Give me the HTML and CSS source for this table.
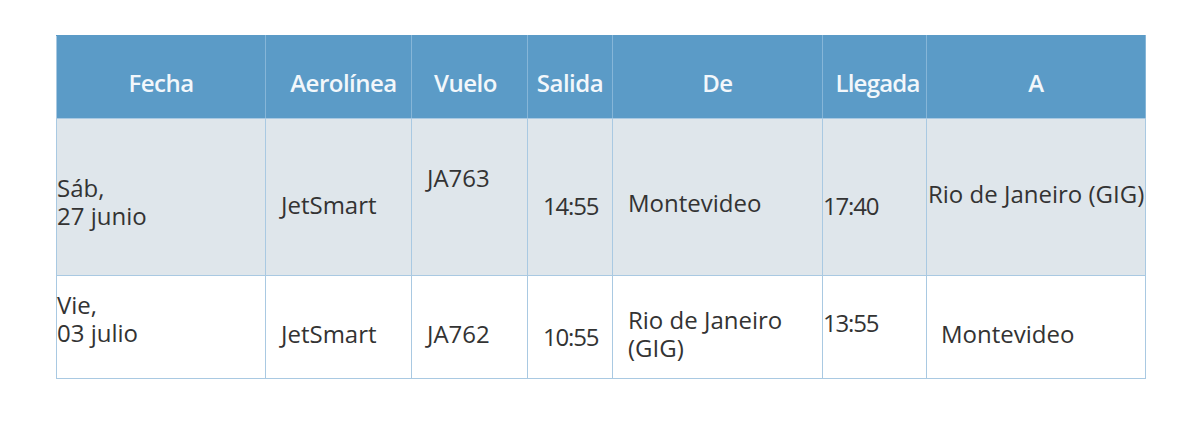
FILE: index.html
```html
<!DOCTYPE html>
<html lang="es">
<head>
<meta charset="utf-8">
<title>Vuelos</title>
<link rel="stylesheet" href="styles.css">
</head>
<body>
<div class="page">
  <table class="flights">
    <colgroup>
      <col class="c-fecha"><col class="c-aero"><col class="c-vuelo"><col class="c-salida"><col class="c-de"><col class="c-llegada"><col class="c-a">
    </colgroup>
    <thead>
      <tr class="head">
        <th>Fecha</th><th class="shift-r">Aerolínea</th><th class="shift-l">Vuelo</th><th>Salida</th><th>De</th><th class="tight">Llegada</th><th>A</th>
      </tr>
    </thead>
    <tbody>
      <tr class="row row-1">
        <td class="flush t55">Sáb,<br>27 junio</td>
        <td class="t72">JetSmart</td>
        <td class="t45">JA763</td>
        <td class="t73 time">14:55</td>
        <td class="t70">Montevideo</td>
        <td class="flush t73 time">17:40</td>
        <td class="near t61">Rio de Janeiro (GIG)</td>
      </tr>
      <tr class="row row-2">
        <td class="flush t15">Vie,<br>03 julio</td>
        <td class="t44">JetSmart</td>
        <td class="t44">JA762</td>
        <td class="t47 time">10:55</td>
        <td class="t30">Rio de Janeiro<br>(GIG)</td>
        <td class="flush t33 time">13:55</td>
        <td class="t44 wide">Montevideo</td>
      </tr>
    </tbody>
  </table>
</div>
</body>
</html>
```

FILE: styles.css
```css
html, body {
  margin: 0;
  padding: 0;
  background: #ffffff;
}

.page {
  padding: 35px 0 0 56px;
}

.flights {
  border-collapse: collapse;
  table-layout: fixed;
  width: 1089px;
  font-family: "Open Sans", "Noto Sans", sans-serif;
  font-size: 24px;
  color: #333333;
}

.c-fecha { width: 209px; }
.c-aero { width: 146px; }
.c-vuelo { width: 116px; }
.c-salida { width: 85px; }
.c-de { width: 210px; }
.c-llegada { width: 104px; }
.c-a { width: 219px; }

.flights th,
.flights td {
  border: 1.5px solid #a9c9e2;
  box-sizing: border-box;
}

.head {
  height: 83px;
  background: #5b9bc7;
}

.head th {
  color: #f2f7fb;
  font-weight: 600;
  text-align: center;
  vertical-align: middle;
  padding: 11px 0 0 0;
  letter-spacing: -0.5px;
  border-top-color: #5b9bc7;
  border-bottom-color: #a9c9e2;
  border-left-color: #86b6d8;
  border-right-color: #86b6d8;
  white-space: nowrap;
}

.head th.shift-r { padding-left: 10px; }
.head th.shift-l { padding-right: 8px; }
.head th.tight { letter-spacing: -0.8px; padding-left: 6px; }

.head th:first-child { border-left-color: #a9c9e2; }

.row td {
  vertical-align: top;
  line-height: 28px;
  padding: 0 0 0 15px;
  white-space: nowrap;
}

.row td.time { letter-spacing: -1.2px; }

.row-1 {
  height: 157px;
  background: #dfe6eb;
}

.row-2 {
  height: 103px;
  background: #ffffff;
}

.row td.flush { padding-left: 0; }
.row td.near { padding-left: 1px; }
.row td.wide { padding-left: 14px; }

.t15 { padding-top: 15px !important; }
.t30 { padding-top: 30px !important; }
.t33 { padding-top: 33px !important; }
.t44 { padding-top: 44px !important; }
.t45 { padding-top: 45px !important; }
.t47 { padding-top: 47px !important; }
.t55 { padding-top: 55px !important; }
.t61 { padding-top: 61px !important; }
.t70 { padding-top: 70px !important; }
.t72 { padding-top: 72px !important; }
.t73 { padding-top: 73px !important; }
```
